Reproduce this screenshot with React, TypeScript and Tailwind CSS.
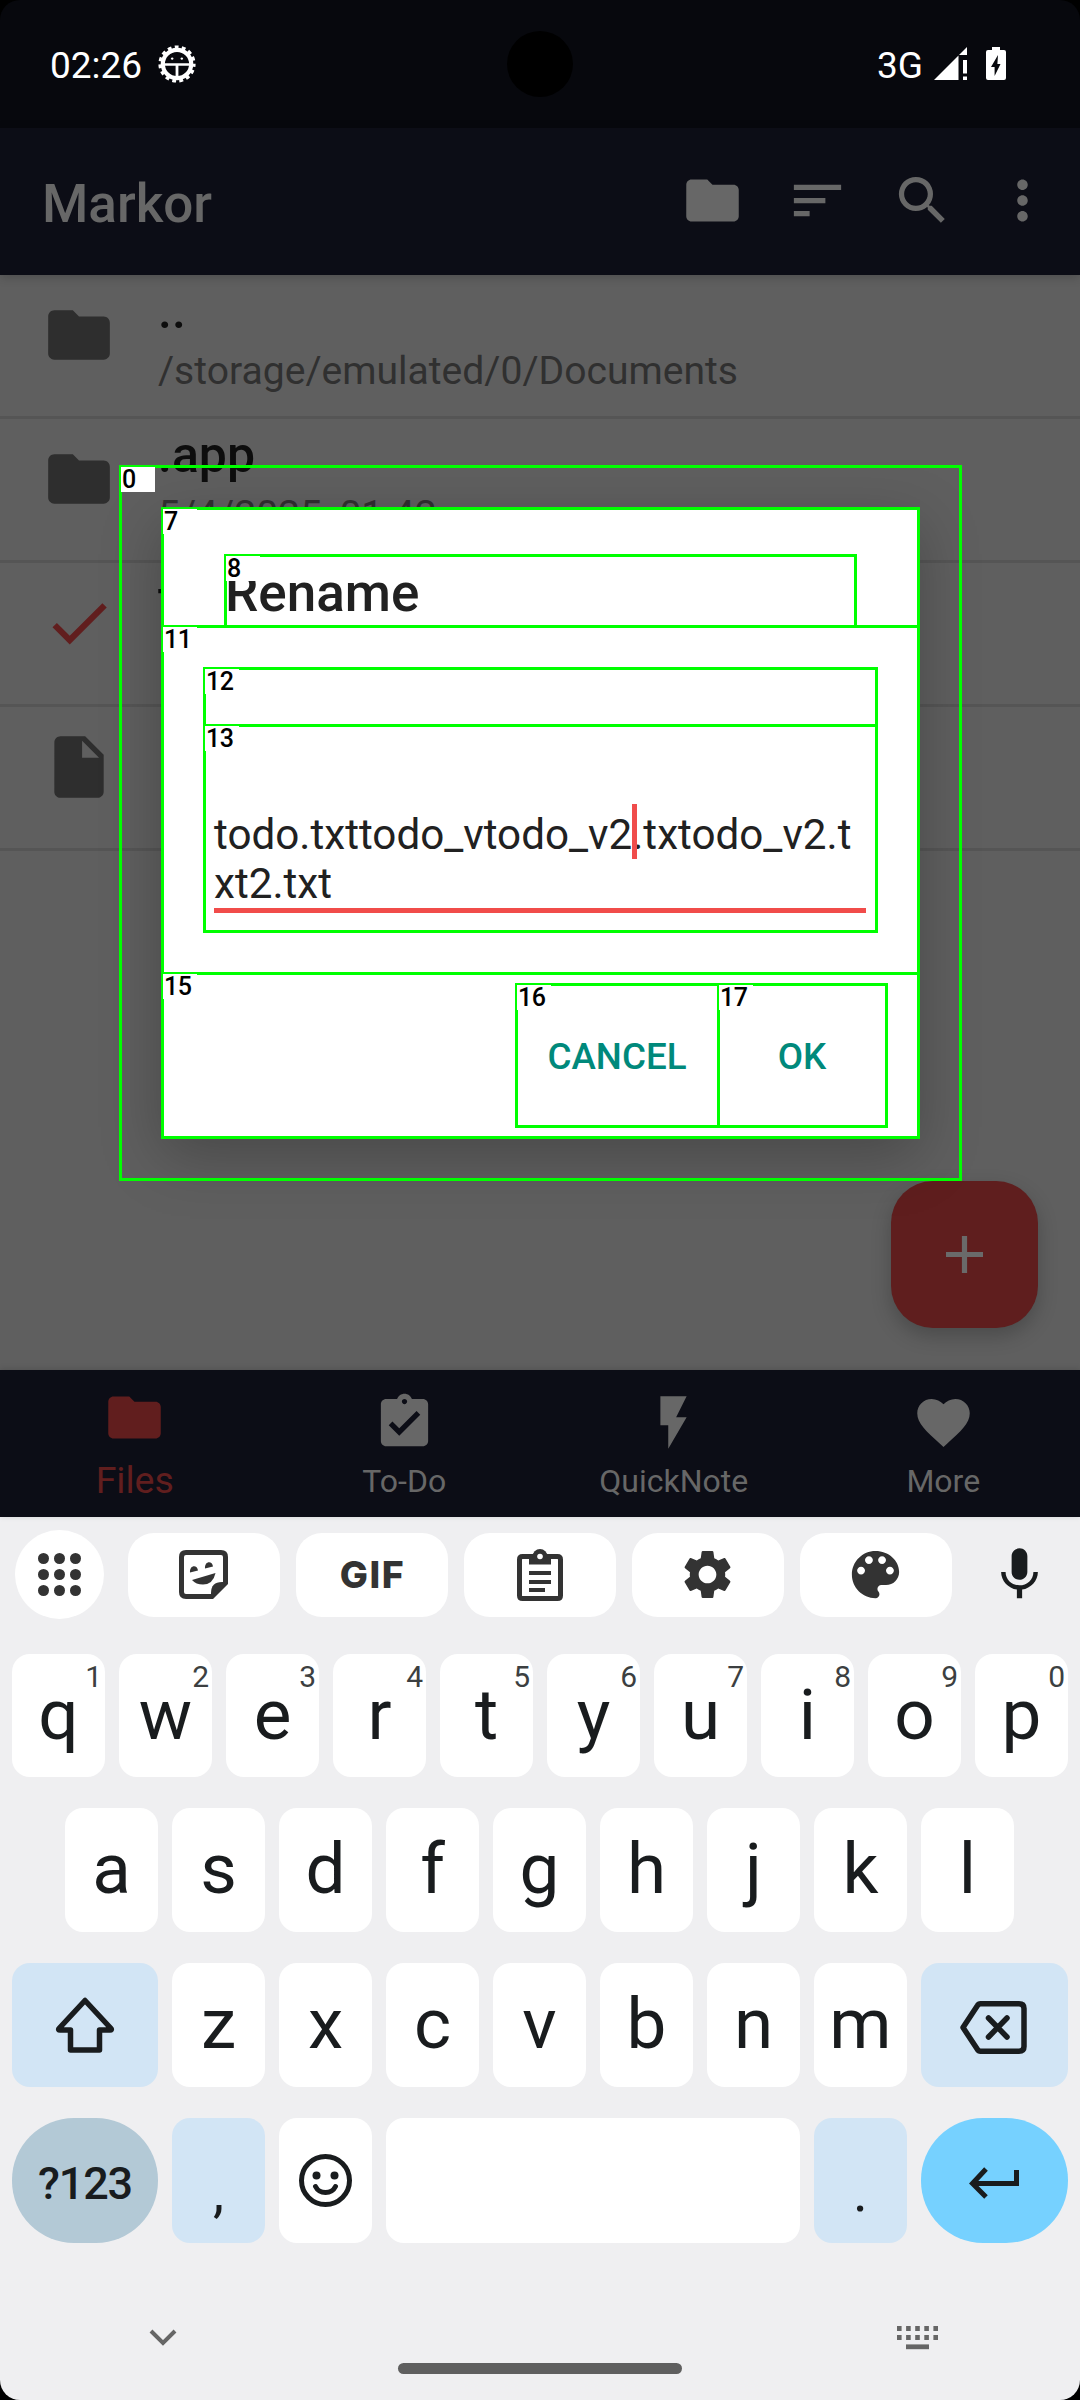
import React from "react";
import {
  MdFolder,
  MdSort,
  MdSearch,
  MdMoreVert,
  MdCheck,
  MdInsertDriveFile,
  MdAssignmentTurnedIn,
  MdFlashOn,
  MdFavorite,
  MdSettings,
  MdMic,
} from "react-icons/md";

/* ---------- Status bar ---------- */

function DebugIcon() {
  return (
    <svg width="38" height="38" viewBox="0 0 38 38" fill="none" stroke="#fff">
      <circle cx="19" cy="19" r="14.2" strokeWidth="4.2" />
      <circle cx="19" cy="19" r="16.8" strokeWidth="3.6" strokeDasharray="3.800 3.238" strokeDashoffset="1" />
      <path d="M5 19.500H33" strokeWidth="2.6" />
      <path d="M19 20V33" strokeWidth="2.8" />
      <circle cx="14.2" cy="13.6" r="1.2" fill="#fff" stroke="none" />
      <circle cx="23.8" cy="13.6" r="1.2" fill="#fff" stroke="none" />
    </svg>
  );
}

function StatusBar() {
  return (
    <div className="relative flex h-[128px] items-start justify-between bg-[#07080d] pl-[50px] pr-[74px] text-white">
      <div className="flex h-[128px] items-center">
        <span className="mt-[3px] text-[37px] leading-[44px]">02:26</span>
        <span className="ml-[16px] block">
          <DebugIcon />
        </span>
      </div>
      <div className="flex items-start pt-[43px]">
        <span className="text-[37px] leading-[46px]">3G</span>
        <svg className="ml-[11px] mt-[4px]" width="33" height="33" viewBox="0 0 33 33" fill="#fff">
          <path d="M0 33L24.5 8.5V33z" />
          <path d="M33 0V8H25z" />
          <path d="M29 13h4v13.5h-4zM29 29.5h4V33h-4z" />
        </svg>
        <svg className="ml-[19px] mt-[4px]" width="20" height="33" viewBox="0 0 20 33">
          <path d="M6 0h8v3h4q2 0 2 2v26q0 2-2 2H2q-2 0-2-2V5q0-2 2-2h4z" fill="#fff" />
          <path d="M12 8L5 20h3.6V29L14.5 17H11.4z" fill="#07080d" />
        </svg>
      </div>
      <div className="absolute left-[507px] top-[31px] size-[66px] rounded-full bg-black" />
    </div>
  );
}

/* ---------- App ---------- */

function AppBar() {
  return (
    <header className="relative z-10 flex h-[147px] items-center bg-[#0c0d16] pl-[42px] text-[#676767] shadow-[0_2px_10px_rgba(0,0,0,0.2)]">
      <h1 className="mt-[4px] flex-1 text-[53px] font-medium leading-[60px]">Markor</h1>
      <div className="flex items-center pr-[26px]">
        <MdFolder size={63} className="-mt-[2px] mr-[42px]" />
        <MdSort size={63} className="-mt-[2px] mr-[42px]" />
        <MdSearch size={63} className="-mt-[2px] mr-[37px]" />
        <MdMoreVert size={63} className="-mt-[2px]" />
      </div>
    </header>
  );
}

function FileRow({ icon, title, subtitle }: { icon: React.ReactNode; title: string; subtitle: string }) {
  return (
    <li className="flex h-36 items-start overflow-hidden border-b-[3px] border-[#555555] pl-[42px]">
      <span className="mt-[23px] block w-[74px] text-[#2e2e2e]">{icon}</span>
      <div className="ml-[42px] mt-[6px]">
        <p className="text-[50px] font-medium leading-[60px] text-[#0d0d0d]">{title}</p>
        <p className="mt-[7px] text-[39.1px] leading-[46px] text-[#303030]">{subtitle}</p>
      </div>
    </li>
  );
}

function FileList() {
  return (
    <main className="relative h-[1095px] bg-[#5f5f5f]">
      <ul>
        <FileRow icon={<MdFolder size={74} />} title=".." subtitle="/storage/emulated/0/Documents" />
        <FileRow icon={<MdFolder size={74} />} title=".app" subtitle="5/4/2025, 01:42" />
        <FileRow icon={<MdCheck size={74} className="text-[#611e1e]" />} title="t" subtitle="" />
        <FileRow icon={<MdInsertDriveFile size={74} />} title="" subtitle="" />
      </ul>
      <button className="absolute bottom-[42px] right-[42px] flex size-[147px] items-center justify-center rounded-[42px] bg-[#5f1e1e] shadow-[0_8px_20px_rgba(0,0,0,0.22)]">
        <svg width="37" height="37" viewBox="0 0 37 37" stroke="#6a6a6a" strokeWidth="5.2">
          <path d="M18.5 0V37M0 18.5H37" />
        </svg>
      </button>
    </main>
  );
}

function BottomNav() {
  const item = "flex w-[270px] flex-col items-center";
  return (
    <nav className="relative flex h-[147px] bg-[#0c0d16] pr-[2px] text-[#676767] shadow-[0_-1px_6px_rgba(0,0,0,0.15)]">
      <div className={item + " text-[#611e1e]"}>
        <MdFolder size={63} className="mt-[16px]" />
        <span className="mt-[9px] text-[37.5px] leading-[44px]">Files</span>
      </div>
      <div className={item}>
        <MdAssignmentTurnedIn size={63} className="mt-[21px]" />
        <span className="mt-[7px] text-[32px] leading-[40px]">To-Do</span>
      </div>
      <div className={item}>
        <MdFlashOn size={63} className="mt-[21px]" />
        <span className="mt-[7px] text-[32px] leading-[40px]">QuickNote</span>
      </div>
      <div className={item}>
        <MdFavorite size={63} className="mt-[21px]" />
        <span className="mt-[7px] text-[32px] leading-[40px]">More</span>
      </div>
    </nav>
  );
}

/* ---------- Rename dialog ---------- */

function RenameDialog() {
  return (
    <section className="absolute left-[162px] top-[508px] z-20 flex h-[629px] w-[756px] flex-col bg-white shadow-[0_18px_56px_rgba(0,0,0,0.25)]">
      <h2 className="h-[118px] pl-[63px] pt-[55px] text-[53px] font-medium leading-[60px] text-[#212121]">Rename</h2>
      <div className="h-[347px] px-[52px] pt-[171px]">
        <div className="relative border-b-[5px] border-[#f14c4a] text-[42.2px] leading-[49px] text-[#212121]">
          <p className="pt-[13px]">todo.txttodo_vtodo_v2.txtodo_v2.t</p>
          <p>xt2.txt</p>
          <span className="absolute left-[418px] top-[7px] h-[55px] w-[5px] bg-[#f04c4b]" />
        </div>
      </div>
      <div className="flex h-[164px] justify-end pr-[32px] pt-[11px] text-[36.75px] font-medium text-[#00897b]">
        <button className="h-[142px] w-[202px] pt-[3px]">CANCEL</button>
        <button className="h-[142px] w-[168px] pt-[3px]">OK</button>
      </div>
    </section>
  );
}

/* ---------- Element annotations ---------- */

const MARKS = [
  { id: "0", at: "left-[119px] top-[465px] w-[843px] h-[716px]" },
  { id: "7", at: "left-[161px] top-[507px] w-[759px] h-[632px]" },
  { id: "8", at: "left-[224px] top-[554px] w-[633px] h-[74px]" },
  { id: "11", at: "left-[161px] top-[625px] w-[759px] h-[350px]" },
  { id: "12", at: "left-[203px] top-[667px] w-[675px] h-[60px]" },
  { id: "13", at: "left-[203px] top-[724px] w-[675px] h-[209px]" },
  { id: "15", at: "left-[161px] top-[972px] w-[759px] h-[167px]" },
  { id: "16", at: "left-[515px] top-[983px] w-[205px] h-[145px]" },
  { id: "17", at: "left-[717px] top-[983px] w-[171px] h-[145px]" },
];

function Marks() {
  return (
    <div className="absolute inset-0 z-30">
      {MARKS.map((m) => (
        <div key={m.id} className={"absolute border-[3px] border-[#00ff00] " + m.at}>
          <span className="absolute -left-[1px] -top-[1px] block h-[25px] w-[34px] bg-white pl-px pt-px text-[25px] font-medium leading-[24px] tracking-[-0.5px] text-black">
            {m.id}
          </span>
        </div>
      ))}
    </div>
  );
}

/* ---------- Keyboard ---------- */

function Letter({ char, hint }: { char: string; hint?: string }) {
  return (
    <div className="relative h-full w-[93px] rounded-[18px] bg-white text-center text-[71px] leading-[122px] text-[#191c1e]">
      {char}
      {hint && (
        <span className="absolute right-[3px] top-[5px] text-[30px] leading-[36px] text-[#3c3f41]">{hint}</span>
      )}
    </div>
  );
}

function StickerIcon() {
  return (
    <svg className="-ml-[2px]" width="49" height="49" viewBox="0 0 49 49">
      <path d="M7 2.5H42Q46.5 2.5 46.5 7V33L33 46.5H7Q2.5 46.5 2.5 42V7Q2.5 2.5 7 2.5z" fill="none" stroke="#333" strokeWidth="5" />
      <path d="M32 48.5V43Q32 32 43 32H48.5z" fill="#333" />
      <path d="M11 22.500C10.500 14.500 18.500 14.500 19 20.500zM26 18.500C25.500 10.500 33.500 10.500 34 16.500z" fill="#333" />
      <path d="M13 30L36.500 23Q34 34.500 24 34.500Q17 34.500 13 30z" fill="#333" />
    </svg>
  );
}

function ClipboardIcon() {
  return (
    <svg className="-ml-[1px]" width="46" height="52" viewBox="0 0 46 52" fill="none" stroke="#333">
      <path d="M5.500 7.500H40.500Q43.500 7.500 43.500 10.500V46.500Q43.500 49.500 40.500 49.500H5.500Q2.500 49.500 2.500 46.500V10.500Q2.500 7.500 5.500 7.500z" strokeWidth="5" />
      <path d="M12 6H34V15.500H12z" fill="#333" stroke="none" />
      <circle cx="23" cy="7.500" r="7.500" fill="#333" stroke="none" />
      <circle cx="23" cy="7.500" r="2.800" fill="#fff" stroke="none" />
      <path d="M12 24H34M12 33H34M12 41H28" strokeWidth="4" />
    </svg>
  );
}

function PaletteIcon() {
  return (
    <svg className="-ml-[2px]" width="63" height="63" viewBox="0 0 24 24" fill="#333">
      <path d="M12 3c-4.970 0-9 4.030-9 9s4.030 9 9 9c.83 0 1.500-.67 1.500-1.500 0-.39-.15-.74-.39-1.010-.23-.26-.38-.61-.38-.99 0-.83.67-1.500 1.500-1.500H16c2.760 0 5-2.240 5-5 0-4.420-4.030-8-9-8zm-5.500 9c-.83 0-1.500-.67-1.500-1.500S5.670 9 6.500 9 8 9.670 8 10.500 7.330 12 6.500 12zm3-4C8.670 8 8 7.330 8 6.500S8.670 5 9.500 5s1.500.67 1.500 1.500S10.330 8 9.500 8zm5 0c-.83 0-1.500-.67-1.500-1.500S13.670 5 14.500 5s1.500.67 1.500 1.500S15.330 8 14.500 8zm3 4c-.83 0-1.500-.67-1.500-1.500S16.670 9 17.500 9s1.500.67 1.500 1.500-.67 1.500-1.500 1.500z" />
    </svg>
  );
}

function Toolbar() {
  const chip = "flex h-[84px] w-[152px] items-center justify-center rounded-[26px] bg-white text-[#333]";
  return (
    <div className="flex h-[89px] items-center pl-[15px]">
      <div className="mr-[24px] flex size-[89px] items-center justify-center rounded-full bg-white">
        <div className="grid grid-cols-3 gap-[5px]">
          {Array.from({ length: 9 }, (_, i) => (
            <span key={i} className="size-[11px] rounded-full bg-[#333]" />
          ))}
        </div>
      </div>
      <div className="flex gap-4">
        <div className={chip}>
          <StickerIcon />
        </div>
        <div className={chip}>
          <span className="-mr-[1px] font-['Inter'] text-[37.5px] font-extrabold leading-[40px] tracking-[1.5px]">GIF</span>
        </div>
        <div className={chip}>
          <ClipboardIcon />
        </div>
        <div className={chip}>
          <MdSettings size={59} className="-ml-[2px]" />
        </div>
        <div className={chip}>
          <PaletteIcon />
        </div>
      </div>
      <MdMic size={63} className="ml-[36px] text-[#191c1e]" />
    </div>
  );
}

function Keyboard() {
  return (
    <section className="flex h-[883px] flex-col bg-[#efeff1] pt-[13px]">
      <Toolbar />
      <div className="mt-[35px] flex h-[123px] gap-[14px] px-3">
        {"qwertyuiop".split("").map((c, i) => (
          <Letter key={c} char={c} hint={"1234567890"[i]} />
        ))}
      </div>
      <div className="mt-[31px] flex h-[124px] gap-[14px] pl-[65px]">
        {"asdfghjkl".split("").map((c) => (
          <Letter key={c} char={c} />
        ))}
      </div>
      <div className="mt-[31px] flex h-[124px] gap-[14px] px-3">
        <div className="flex w-[146px] items-center justify-center rounded-[18px] bg-[#d2e5f5]">
          <svg width="60" height="58" viewBox="0 0 60 58" fill="none" stroke="#191c1e" strokeWidth="5.500" strokeLinejoin="round">
            <path d="M30 4.500L4 32.500Q3 34 5 34H15.500V54H44.500V34H55Q57 34 56 32.500z" />
          </svg>
        </div>
        {"zxcvbnm".split("").map((c) => (
          <Letter key={c} char={c} />
        ))}
        <div className="flex w-[147px] items-center justify-center rounded-[18px] bg-[#d2e5f5]">
          <svg className="-ml-[2px] mt-[4px]" width="67" height="53" viewBox="0 0 67 53" fill="none" stroke="#191c1e" strokeWidth="5.500" strokeLinejoin="round" strokeLinecap="round">
            <path d="M20.500 2.800H59Q64 2.800 64 7.500V45.500Q64 50.200 59 50.200H20.500Q18.500 50.200 17.500 48.500L3 26.500L17.500 4.500Q18.500 2.800 20.500 2.800z" />
            <path d="M28.500 17L47 36M47 17L28.500 36" />
          </svg>
        </div>
      </div>
      <div className="mt-[31px] flex h-[125px] gap-[14px] px-3 text-[#191c1e]">
        <div className="w-[146px] rounded-[62px] bg-[#b3c9d6] text-center text-[45px] font-medium leading-[132px] tracking-[-1.2px]">?123</div>
        <div className="w-[93px] rounded-[18px] bg-[#d2e5f5] text-center text-[56px] leading-[148px]">,</div>
        <div className="flex w-[93px] items-center justify-center rounded-[18px] bg-white">
          <svg width="53" height="53" viewBox="0 0 53 53" fill="none" stroke="#191c1e" strokeWidth="5">
            <circle cx="26.500" cy="26.500" r="24" />
            <circle cx="17.500" cy="21.500" r="4" fill="#191c1e" stroke="none" />
            <circle cx="35.500" cy="21.500" r="4" fill="#191c1e" stroke="none" />
            <path d="M16.500 32.500Q19.500 38.500 26.500 38.500T36.500 32.500" strokeLinecap="round" />
          </svg>
        </div>
        <div className="w-[414px] rounded-[18px] bg-white" />
        <div className="w-[93px] rounded-[18px] bg-[#d2e5f5] text-center text-[56px] leading-[148px]">.</div>
        <div className="flex w-[147px] items-center justify-center rounded-[62px] bg-[#76d1ff]">
          <svg className="-ml-[2px] mt-[5px]" width="50" height="32" viewBox="0 0 50 32" fill="none" stroke="#191c1e" strokeWidth="5">
            <path d="M47.500 3V16.500H4M17 2L3.500 16.500L17 30" />
          </svg>
        </div>
      </div>
      <div className="mt-[83px] flex h-[24px] items-center justify-between pl-[149px] pr-[142px]">
        <svg width="28" height="18" viewBox="0 0 28 18" fill="none" stroke="#666" strokeWidth="4">
          <path d="M2 2L14 14L26 2" />
        </svg>
        <svg width="41" height="24" viewBox="0 0 41 24" stroke="#666" fill="none">
          <path d="M0 2.500H41M0 11.500H41" strokeWidth="5" strokeDasharray="4.600 4.500" />
          <path d="M9 20.800H32" strokeWidth="4.800" />
        </svg>
      </div>
      <div className="mx-auto mt-[13px] h-[11px] w-[284px] rounded-full bg-[#5f5f5f]" />
    </section>
  );
}

export default function App() {
  return (
    <div className="h-[2400px] w-[1080px] overflow-hidden bg-black font-['Roboto',sans-serif]">
      <div className="relative h-full overflow-hidden rounded-[20px]">
        <StatusBar />
        <AppBar />
        <FileList />
        <BottomNav />
        <Keyboard />
        <RenameDialog />
        <Marks />
      </div>
    </div>
  );
}
